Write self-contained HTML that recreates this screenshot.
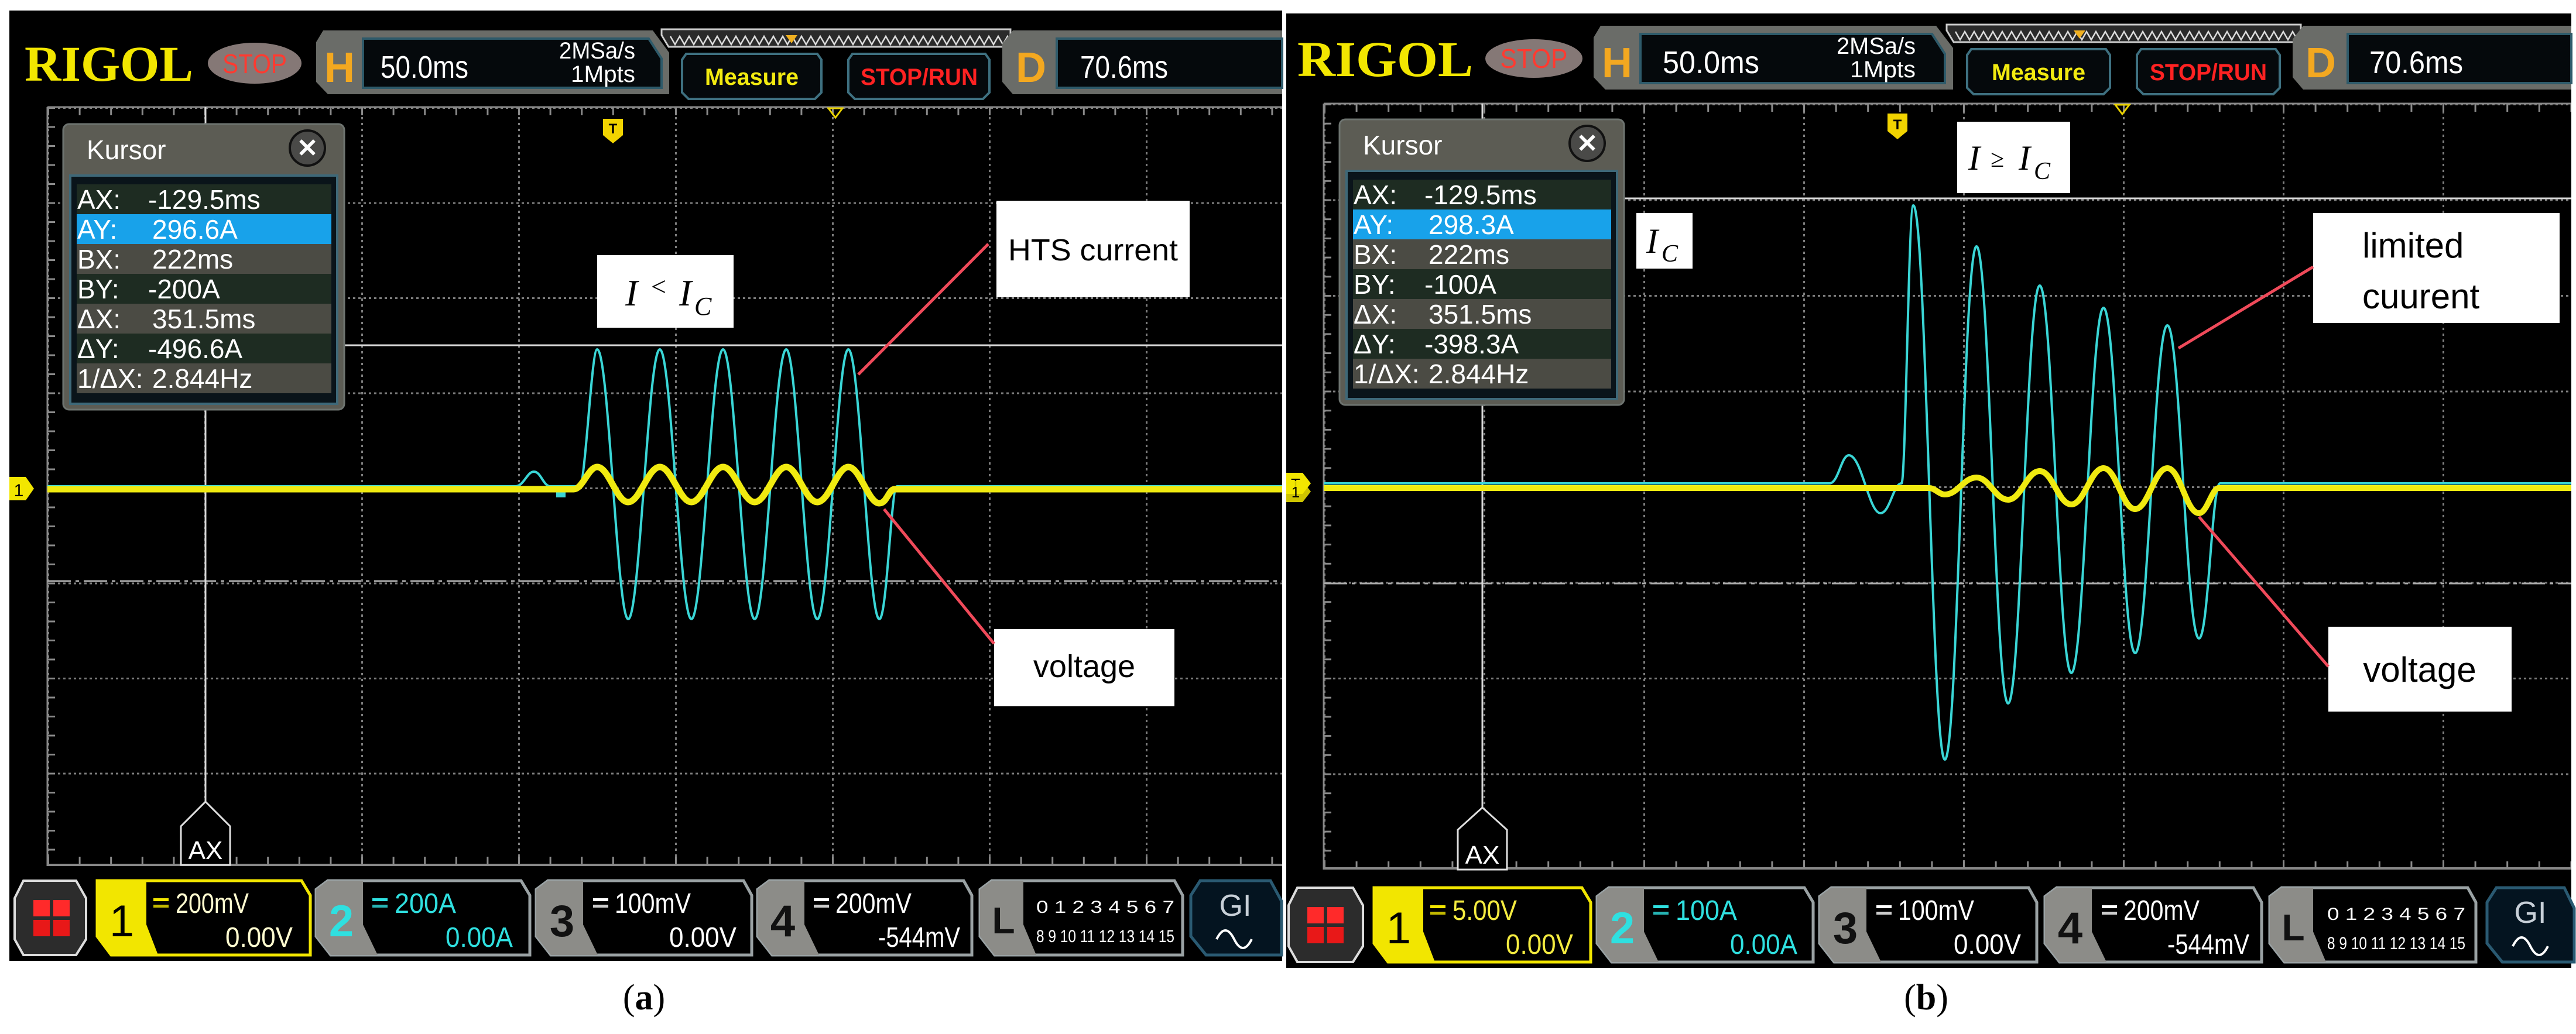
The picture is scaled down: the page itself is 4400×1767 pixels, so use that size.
<!DOCTYPE html>
<html><head><meta charset="utf-8"><style>
html,body{margin:0;padding:0;background:#fff;}
svg{display:block;}
</style></head><body>
<svg width="4400" height="1767" viewBox="0 0 4400 1767" xmlns="http://www.w3.org/2000/svg" font-family="Liberation Sans, sans-serif">
<defs>
<pattern id="vlA" x="81" y="0" width="268" height="10" patternUnits="userSpaceOnUse"><rect x="0" y="0" width="3" height="4" fill="#7d7d7d"/></pattern>
<pattern id="hlA" x="0" y="183" width="9" height="162.5" patternUnits="userSpaceOnUse"><rect x="0" y="0" width="4" height="3" fill="#7d7d7d"/></pattern>
<pattern id="vlB" x="2261" y="0" width="273" height="10" patternUnits="userSpaceOnUse"><rect x="0" y="0" width="3" height="4" fill="#7d7d7d"/></pattern>
<pattern id="hlB" x="0" y="177" width="9" height="163.5" patternUnits="userSpaceOnUse"><rect x="0" y="0" width="4" height="3" fill="#7d7d7d"/></pattern>
<pattern id="txA" x="81" y="0" width="53.6" height="20" patternUnits="userSpaceOnUse"><rect x="0" y="0" width="3" height="20" fill="#8a8a8a"/></pattern>
<pattern id="tyA" x="0" y="183" width="20" height="32.5" patternUnits="userSpaceOnUse"><rect x="0" y="0" width="14" height="3" fill="#8a8a8a"/></pattern>
<pattern id="txB" x="2261" y="0" width="54.6" height="20" patternUnits="userSpaceOnUse"><rect x="0" y="0" width="3" height="20" fill="#8a8a8a"/></pattern>
<pattern id="tyB" x="0" y="177" width="20" height="32.7" patternUnits="userSpaceOnUse"><rect x="0" y="0" width="14" height="3" fill="#8a8a8a"/></pattern>
</defs>
<rect width="4400" height="1767" fill="#fff"/>
<rect x="16" y="18" width="2174" height="1624" fill="#000"/>
<rect x="2197" y="23" width="2195" height="1631" fill="#000"/>

<!-- GRID A -->
<rect x="81" y="183" width="2109" height="1297" fill="url(#vlA)"/>
<rect x="81" y="183" width="2109" height="1297" fill="url(#hlA)"/>
<rect x="81" y="183" width="2109" height="14" fill="url(#txA)"/>
<rect x="81" y="1464" width="2109" height="14" fill="url(#txA)"/>
<rect x="81" y="183" width="14" height="1297" fill="url(#tyA)"/>
<line x1="81" y1="183" x2="2190" y2="183" stroke="#888" stroke-width="3"/>
<line x1="81" y1="183" x2="81" y2="1480" stroke="#888" stroke-width="3"/>
<line x1="81" y1="1478" x2="2190" y2="1478" stroke="#888" stroke-width="4"/>
<!-- GRID B -->
<rect x="2261" y="177" width="2131" height="1309" fill="url(#vlB)"/>
<rect x="2261" y="177" width="2131" height="1309" fill="url(#hlB)"/>
<rect x="2261" y="177" width="2131" height="14" fill="url(#txB)"/>
<rect x="2261" y="1472" width="2131" height="14" fill="url(#txB)"/>
<rect x="2261" y="177" width="14" height="1309" fill="url(#tyB)"/>
<line x1="2261" y1="177" x2="4392" y2="177" stroke="#888" stroke-width="3"/>
<line x1="2261" y1="177" x2="2261" y2="1486" stroke="#888" stroke-width="3"/>
<line x1="2261" y1="1484" x2="4392" y2="1484" stroke="#888" stroke-width="4"/>

<!-- cursor lines A -->
<line x1="81" y1="993" x2="2190" y2="993" stroke="#aaa" stroke-width="3" stroke-dasharray="40,8,6,8"/>
<line x1="586" y1="590" x2="2190" y2="590" stroke="#d8d8d8" stroke-width="3"/>
<line x1="351" y1="183" x2="351" y2="1370" stroke="#d8d8d8" stroke-width="3"/>
<path d="M351 1370 L393 1412 L393 1478 L309 1478 L309 1412 Z" fill="#000" stroke="#e0e0e0" stroke-width="3"/>
<text x="351" y="1468" font-size="44" fill="#fff" text-anchor="middle">AX</text>
<!-- cursor lines B -->
<line x1="2261" y1="997" x2="4392" y2="997" stroke="#aaa" stroke-width="3" stroke-dasharray="40,8,6,8"/>
<line x1="2774" y1="339" x2="4392" y2="339" stroke="#d8d8d8" stroke-width="3"/>
<line x1="2532" y1="177" x2="2532" y2="1380" stroke="#d8d8d8" stroke-width="3"/>
<path d="M2532 1380 L2574 1418 L2574 1486 L2490 1486 L2490 1418 Z" fill="#000" stroke="#e0e0e0" stroke-width="3"/>
<text x="2532" y="1476" font-size="44" fill="#fff" text-anchor="middle">AX</text>

<!-- trigger markers -->
<path d="M1030 203 h34 v28 l-17 14 l-17 -14 Z" fill="#f2d400"/><text x="1047" y="228" font-size="24" font-weight="bold" text-anchor="middle" fill="#000">T</text>
<path d="M1415 185 h24 l-12 16 Z" fill="none" stroke="#e8d000" stroke-width="3"/>
<path d="M3224 194 h34 v30 l-17 14 l-17 -14 Z" fill="#f2d400"/><text x="3241" y="221" font-size="24" font-weight="bold" text-anchor="middle" fill="#000">T</text>
<path d="M3613 179 h24 l-12 16 Z" fill="none" stroke="#e8d000" stroke-width="3"/>

<!-- WAVES A -->
<path d="M81 831 L880 831 C895 831 900 806 912 806 C924 806 928 831 940 831 L990 831
C1000 831 1010 597 1020 597 C1040 597 1054 1058 1073 1058 C1093 1058 1107 597 1127 597 C1147 597 1161 1058 1181 1058 C1201 1058 1215 597 1235 597 C1255 597 1269 1058 1289 1058 C1309 1058 1323 597 1343 597 C1362 597 1376 1058 1396 1058 C1416 1058 1430 597 1449 597 C1469 597 1483 1058 1502 1058 C1515 1058 1522 831 1532 831 L2190 831"
 fill="none" stroke="#3ad6d6" stroke-width="4"/>
<rect x="950" y="840" width="16" height="10" fill="#3ad6d6"/>
<path d="M81 836 L980 836 C995 836 1005 798 1020 798 C1040 798 1053 858 1073 858 C1093 858 1107 798 1127 798 C1147 798 1161 858 1181 858 C1201 858 1215 798 1235 798 C1255 798 1269 858 1289 858 C1309 858 1323 798 1343 798 C1362 798 1376 858 1396 858 C1416 858 1430 798 1449 798 C1469 798 1483 860 1502 860 C1515 860 1518 836 1528 836 L2190 836" fill="none" stroke="#f0ea10" stroke-width="11" stroke-linejoin="round"/>
<path d="M16 815 h28 l14 20 l-14 20 h-28 Z" fill="#f2e600"/><text x="32" y="848" font-size="30" fill="#000" text-anchor="middle">1</text>

<!-- WAVES B -->
<path d="M2261 826 L3125 826 C3140 826 3145 778 3158 778 C3180 778 3192 877 3212 877 C3228 877 3234 826 3248 826
C3255 826 3260 351 3268 351 C3290 351 3300 1298 3322 1298 C3344 1298 3354 421 3376 421 C3398 421 3408 1202 3430 1202 C3452 1202 3462 488 3484 488 C3506 488 3516 1150 3538 1150 C3560 1150 3571 526 3593 526 C3615 526 3625 1116 3647 1116 C3669 1116 3680 556 3702 556 C3724 556 3734 1091 3756 1091 C3772 1091 3778 826 3792 826 L4392 826"
 fill="none" stroke="#3ad6d6" stroke-width="4"/>
<path d="M2261 834 L3295 834 C3305 834 3312 845 3322 845 C3344 845 3354 816 3376 816 C3398 816 3408 854 3430 854 C3452 854 3462 805 3484 805 C3506 805 3516 862 3538 862 C3560 862 3571 800 3593 800 C3615 800 3625 870 3647 870 C3669 870 3680 800 3702 800 C3724 800 3734 877 3756 877 C3770 877 3778 834 3790 834 L4392 834" fill="none" stroke="#f0ea10" stroke-width="10" stroke-linejoin="round"/>
<path d="M2197 808 h28 l14 18 l-14 18 h-28 Z" fill="#f2e600"/><text x="2213" y="836" font-size="26" fill="#000" text-anchor="middle">T</text>
<path d="M2197 822 h28 l14 18 l-14 18 h-28 Z" fill="#f2e600" opacity="0.85"/><text x="2213" y="850" font-size="26" fill="#000" text-anchor="middle">1</text>

<!-- ANNOTATIONS A -->
<rect x="1020" y="436" width="233" height="124" fill="#fff"/>
<text x="1068" y="522" font-family="Liberation Serif, serif" font-style="italic" font-size="64" fill="#000">I</text>
<text x="1112" y="505" font-family="Liberation Serif, serif" font-size="46" fill="#000">&lt;</text>
<text x="1160" y="522" font-family="Liberation Serif, serif" font-style="italic" font-size="64" fill="#000">I</text>
<text x="1186" y="538" font-family="Liberation Serif, serif" font-style="italic" font-size="44" fill="#000">C</text>
<rect x="1702" y="343" width="330" height="165" fill="#fff"/>
<text x="1867" y="445" font-size="52" fill="#000" text-anchor="middle" textLength="290" lengthAdjust="spacingAndGlyphs">HTS current</text>
<line x1="1688" y1="417" x2="1466" y2="640" stroke="#f04a5a" stroke-width="5"/>
<rect x="1698" y="1075" width="308" height="132" fill="#fff"/>
<text x="1852" y="1157" font-size="54" fill="#000" text-anchor="middle">voltage</text>
<line x1="1698" y1="1100" x2="1510" y2="870" stroke="#f04a5a" stroke-width="5"/>

<!-- ANNOTATIONS B -->
<rect x="3343" y="208" width="193" height="122" fill="#fff"/>
<text x="3362" y="290" font-family="Liberation Serif, serif" font-style="italic" font-size="60" fill="#000">I</text>
<text x="3400" y="285" font-family="Liberation Serif, serif" font-size="42" fill="#000">≥</text>
<text x="3448" y="290" font-family="Liberation Serif, serif" font-style="italic" font-size="60" fill="#000">I</text>
<text x="3474" y="306" font-family="Liberation Serif, serif" font-style="italic" font-size="42" fill="#000">C</text>
<rect x="2795" y="364" width="96" height="95" fill="#fff"/>
<text x="2812" y="432" font-family="Liberation Serif, serif" font-style="italic" font-size="60" fill="#000">I</text>
<text x="2838" y="447" font-family="Liberation Serif, serif" font-style="italic" font-size="42" fill="#000">C</text>
<rect x="3951" y="364" width="421" height="188" fill="#fff"/>
<text x="4035" y="440" font-size="60" fill="#000">limited</text>
<text x="4035" y="527" font-size="60" fill="#000">cuurent</text>
<line x1="3951" y1="456" x2="3721" y2="595" stroke="#f04a5a" stroke-width="5"/>
<rect x="3977" y="1071" width="313" height="145" fill="#fff"/>
<text x="4133" y="1165" font-size="60" fill="#000" text-anchor="middle">voltage</text>
<line x1="3977" y1="1139" x2="3756" y2="883" stroke="#f04a5a" stroke-width="5"/>

<!-- KURSOR A -->
<g>
<rect x="108" y="212" width="480" height="488" rx="10" fill="#5c5c54" stroke="#6e7470" stroke-width="3"/>
<text x="148" y="272" font-size="46" fill="#fff">Kursor</text>
<circle cx="525" cy="253" r="30" fill="#4a4a48" stroke="#111" stroke-width="4"/>
<text x="525" y="268" font-size="44" font-weight="bold" fill="#fff" text-anchor="middle">✕</text>
<rect x="120" y="300" width="456" height="390" fill="#0a141a" stroke="#3e6878" stroke-width="4"/>
<rect x="131" y="315" width="435" height="51" fill="#1e2c22"/>
<rect x="131" y="366" width="435" height="51" fill="#18a2ea"/>
<rect x="131" y="417" width="435" height="51" fill="#4b4b44"/>
<rect x="131" y="468" width="435" height="51" fill="#1e2c22"/>
<rect x="131" y="519" width="435" height="51" fill="#4b4b44"/>
<rect x="131" y="570" width="435" height="51" fill="#1e2c22"/>
<rect x="131" y="621" width="435" height="51" fill="#4b4b44"/>
<g font-size="46" fill="#fff">
<text x="132" y="357">AX:</text><text x="253" y="357">-129.5ms</text>
<text x="132" y="408">AY:</text><text x="260" y="408">296.6A</text>
<text x="132" y="459">BX:</text><text x="260" y="459">222ms</text>
<text x="132" y="510">BY:</text><text x="253" y="510">-200A</text>
<text x="132" y="561">ΔX:</text><text x="260" y="561">351.5ms</text>
<text x="132" y="612">ΔY:</text><text x="253" y="612">-496.6A</text>
<text x="132" y="663">1/ΔX:</text><text x="260" y="663">2.844Hz</text>
</g>
</g>
<!-- KURSOR B -->
<g transform="translate(2180,-8)">
<rect x="108" y="212" width="486" height="488" rx="10" fill="#5c5c54" stroke="#6e7470" stroke-width="3"/>
<text x="148" y="272" font-size="46" fill="#fff">Kursor</text>
<circle cx="531" cy="253" r="30" fill="#4a4a48" stroke="#111" stroke-width="4"/>
<text x="531" y="268" font-size="44" font-weight="bold" fill="#fff" text-anchor="middle">✕</text>
<rect x="120" y="300" width="462" height="390" fill="#0a141a" stroke="#3e6878" stroke-width="4"/>
<rect x="131" y="315" width="441" height="51" fill="#1e2c22"/>
<rect x="131" y="366" width="441" height="51" fill="#18a2ea"/>
<rect x="131" y="417" width="441" height="51" fill="#4b4b44"/>
<rect x="131" y="468" width="441" height="51" fill="#1e2c22"/>
<rect x="131" y="519" width="441" height="51" fill="#4b4b44"/>
<rect x="131" y="570" width="441" height="51" fill="#1e2c22"/>
<rect x="131" y="621" width="441" height="51" fill="#4b4b44"/>
<g font-size="46" fill="#fff">
<text x="132" y="357">AX:</text><text x="253" y="357">-129.5ms</text>
<text x="132" y="408">AY:</text><text x="260" y="408">298.3A</text>
<text x="132" y="459">BX:</text><text x="260" y="459">222ms</text>
<text x="132" y="510">BY:</text><text x="253" y="510">-100A</text>
<text x="132" y="561">ΔX:</text><text x="260" y="561">351.5ms</text>
<text x="132" y="612">ΔY:</text><text x="253" y="612">-398.3A</text>
<text x="132" y="663">1/ΔX:</text><text x="260" y="663">2.844Hz</text>
</g>
</g>

<!-- TOP BAR A -->
<g>
<text x="42" y="138" font-family="Liberation Serif, serif" font-weight="bold" font-size="86" fill="#f2e600" textLength="288" lengthAdjust="spacingAndGlyphs">RIGOL</text>
<ellipse cx="435" cy="108" rx="80" ry="35" fill="#857876"/>
<text x="435" y="125" font-size="46" fill="#ff3a30" text-anchor="middle" textLength="110" lengthAdjust="spacingAndGlyphs">STOP</text>
<path d="M552 52 H1115 L1143 90 V161 H560 L540 140 V72 Z" fill="#6a6c68"/>
<path d="M620 66 H1108 L1130 100 V150 H620 Z" fill="#05090c" stroke="#2e5a6a" stroke-width="4"/>
<text x="554" y="140" font-size="72" fill="#f3a820" font-weight="bold">H</text>
<text x="650" y="133" font-size="54" fill="#fff" textLength="150" lengthAdjust="spacingAndGlyphs">50.0ms</text>
<text x="1085" y="100" font-size="40" fill="#fff" text-anchor="end" textLength="130" lengthAdjust="spacingAndGlyphs">2MSa/s</text>
<text x="1085" y="140" font-size="40" fill="#fff" text-anchor="end" textLength="110" lengthAdjust="spacingAndGlyphs">1Mpts</text>
<path d="M1130 50 H1726 V60 L1714 80 H1142 L1130 60 Z" fill="#2a2a2a" stroke="#ccc" stroke-width="3"/>
<path d="M1145 62 l8 14 l8 -14 l8 14 l8 -14 l8 14 l8 -14 l8 14 l8 -14 l8 14 l8 -14 l8 14 l8 -14 l8 14 l8 -14 l8 14 l8 -14 l8 14 l8 -14 l8 14 l8 -14 l8 14 l8 -14 l8 14 l8 -14 l8 14 l8 -14 l8 14 l8 -14 l8 14 l8 -14 l8 14 l8 -14 l8 14 l8 -14 l8 14 l8 -14 l8 14 l8 -14 l8 14 l8 -14 l8 14 l8 -14 l8 14 l8 -14 l8 14 l8 -14 l8 14 l8 -14 l8 14 l8 -14 l8 14 l8 -14 l8 14 l8 -14 l8 14 l8 -14 l8 14 l8 -14 l8 14 l8 -14 l8 14 l8 -14 l8 14 l8 -14 l8 14 l8 -14 l8 14 l8 -14 l8 14 l8 -14 l8 14 l8 -14 l8 14 l8 -14 l8 14 l8 -14 l8 14 l8 -14 l8 14 l8 -14" fill="none" stroke="#ddd" stroke-width="2.5"/>
<path d="M1342 60 h20 l-10 14 Z" fill="#f0b020"/>
<path d="M1172 92 H1396 L1403 102 V158 L1392 169 H1176 L1165 158 V102 Z" fill="#05090c" stroke="#3e7080" stroke-width="4"/>
<text x="1284" y="145" font-size="40" font-weight="bold" fill="#f2ea10" text-anchor="middle" textLength="160" lengthAdjust="spacingAndGlyphs">Measure</text>
<path d="M1456 92 H1683 L1690 102 V158 L1679 169 H1460 L1449 158 V102 Z" fill="#05090c" stroke="#3e7080" stroke-width="4"/>
<text x="1570" y="145" font-size="40" font-weight="bold" fill="#ff2222" text-anchor="middle" textLength="200" lengthAdjust="spacingAndGlyphs">STOP/RUN</text>
<path d="M1730 52 H2190 V161 H1730 L1712 140 V75 Z" fill="#6a6c68"/>
<path d="M1805 66 H2190 V150 H1805 Z" fill="#05090c" stroke="#2e5a6a" stroke-width="4"/>
<text x="1735" y="140" font-size="72" fill="#f3a820" font-weight="bold">D</text>
<text x="1845" y="133" font-size="54" fill="#fff" textLength="150" lengthAdjust="spacingAndGlyphs">70.6ms</text>
</g>
<!-- TOP BAR B -->
<g transform="translate(2182,-8)">
<text x="34" y="138" font-family="Liberation Serif, serif" font-weight="bold" font-size="86" fill="#f2e600" textLength="300" lengthAdjust="spacingAndGlyphs">RIGOL</text>
<ellipse cx="438" cy="108" rx="83" ry="33" fill="#857876"/>
<text x="438" y="124" font-size="46" fill="#ff3a30" text-anchor="middle" textLength="115" lengthAdjust="spacingAndGlyphs">STOP</text>
<path d="M552 52 H1125 L1154 90 V161 H560 L540 140 V72 Z" fill="#6a6c68"/>
<path d="M620 66 H1118 L1140 100 V150 H620 Z" fill="#05090c" stroke="#2e5a6a" stroke-width="4"/>
<text x="554" y="140" font-size="72" fill="#f3a820" font-weight="bold">H</text>
<text x="658" y="133" font-size="54" fill="#fff" textLength="165" lengthAdjust="spacingAndGlyphs">50.0ms</text>
<text x="1090" y="100" font-size="40" fill="#fff" text-anchor="end" textLength="135" lengthAdjust="spacingAndGlyphs">2MSa/s</text>
<text x="1090" y="140" font-size="40" fill="#fff" text-anchor="end" textLength="112" lengthAdjust="spacingAndGlyphs">1Mpts</text>
<path d="M1143 50 H1748 V60 L1736 80 H1155 L1143 60 Z" fill="#2a2a2a" stroke="#ccc" stroke-width="3"/>
<path d="M1158 62 l8 14 l8 -14 l8 14 l8 -14 l8 14 l8 -14 l8 14 l8 -14 l8 14 l8 -14 l8 14 l8 -14 l8 14 l8 -14 l8 14 l8 -14 l8 14 l8 -14 l8 14 l8 -14 l8 14 l8 -14 l8 14 l8 -14 l8 14 l8 -14 l8 14 l8 -14 l8 14 l8 -14 l8 14 l8 -14 l8 14 l8 -14 l8 14 l8 -14 l8 14 l8 -14 l8 14 l8 -14 l8 14 l8 -14 l8 14 l8 -14 l8 14 l8 -14 l8 14 l8 -14 l8 14 l8 -14 l8 14 l8 -14 l8 14 l8 -14 l8 14 l8 -14 l8 14 l8 -14 l8 14 l8 -14 l8 14 l8 -14 l8 14 l8 -14 l8 14 l8 -14 l8 14 l8 -14 l8 14 l8 -14 l8 14 l8 -14 l8 14 l8 -14 l8 14 l8 -14 l8 14 l8 -14 l8 14 l8 -14" fill="none" stroke="#ddd" stroke-width="2.5"/>
<path d="M1360 60 h20 l-10 14 Z" fill="#f0b020"/>
<path d="M1185 92 H1415 L1422 102 V158 L1411 169 H1189 L1178 158 V102 Z" fill="#05090c" stroke="#3e7080" stroke-width="4"/>
<text x="1300" y="145" font-size="40" font-weight="bold" fill="#f2ea10" text-anchor="middle" textLength="160" lengthAdjust="spacingAndGlyphs">Measure</text>
<path d="M1475 92 H1705 L1712 102 V158 L1701 169 H1479 L1468 158 V102 Z" fill="#05090c" stroke="#3e7080" stroke-width="4"/>
<text x="1590" y="145" font-size="40" font-weight="bold" fill="#ff2222" text-anchor="middle" textLength="200" lengthAdjust="spacingAndGlyphs">STOP/RUN</text>
<path d="M1752 52 H2210 V161 H1752 L1734 140 V75 Z" fill="#6a6c68"/>
<path d="M1828 66 H2210 V150 H1828 Z" fill="#05090c" stroke="#2e5a6a" stroke-width="4"/>
<text x="1756" y="140" font-size="72" fill="#f3a820" font-weight="bold">D</text>
<text x="1865" y="133" font-size="54" fill="#fff" textLength="160" lengthAdjust="spacingAndGlyphs">70.6ms</text>
</g>

<!-- BOTTOM BAR A -->
<g>
<path d="M40 1505 H130 L147 1535 V1605 L130 1632 H40 L25 1605 V1535 Z" fill="#2c2c2c" stroke="#ddd" stroke-width="4"/>
<rect x="57" y="1538" width="28" height="28" fill="#ff2a2a"/><rect x="91" y="1538" width="28" height="28" fill="#ff2a2a"/>
<rect x="57" y="1572" width="28" height="28" fill="#e81818"/><rect x="91" y="1572" width="28" height="28" fill="#e81818"/>
<path d="M166 1505 H515 L530 1530 V1632 H190 L166 1600 Z" fill="#000" stroke="#f2e600" stroke-width="5"/>
<path d="M166 1505 H250 V1580 L270 1632 H190 L166 1600 Z" fill="#f2e600"/>
<text x="208" y="1600" font-size="76" fill="#000" text-anchor="middle">1</text>
<rect x="262" y="1535" width="26" height="5" fill="#f2e600"/><rect x="262" y="1546" width="26" height="5" fill="#f2e600" opacity="0.8"/>
<text x="300" y="1560" font-size="48" fill="#fffbd0" textLength="125" lengthAdjust="spacingAndGlyphs">200mV</text>
<text x="500" y="1618" font-size="48" fill="#fffbd0" text-anchor="end" textLength="115" lengthAdjust="spacingAndGlyphs">0.00V</text>

<path d="M560 1505 H890 L905 1530 V1632 H565 L540 1600 V1520 Z" fill="#000" stroke="#9aa2a4" stroke-width="5"/>
<path d="M560 1505 H620 V1580 L645 1632 H565 L540 1600 V1520 Z" fill="#8c8c88"/>
<text x="583" y="1600" font-size="76" font-weight="bold" fill="#2fe0e0" text-anchor="middle">2</text>
<rect x="636" y="1535" width="26" height="5" fill="#2fe0e0"/><rect x="636" y="1546" width="26" height="5" fill="#2fe0e0" opacity="0.8"/>
<text x="674" y="1560" font-size="48" fill="#2fe0e0" textLength="105" lengthAdjust="spacingAndGlyphs">200A</text>
<text x="876" y="1618" font-size="48" fill="#2fe0e0" text-anchor="end" textLength="115" lengthAdjust="spacingAndGlyphs">0.00A</text>

<path d="M936 1505 H1270 L1284 1530 V1632 H941 L916 1600 V1520 Z" fill="#000" stroke="#9aa2a4" stroke-width="5"/>
<path d="M936 1505 H996 V1580 L1021 1632 H941 L916 1600 V1520 Z" fill="#8c8c88"/>
<text x="960" y="1600" font-size="76" font-weight="bold" fill="#111" text-anchor="middle">3</text>
<rect x="1013" y="1535" width="26" height="5" fill="#fff"/><rect x="1013" y="1546" width="26" height="5" fill="#fff" opacity="0.8"/>
<text x="1050" y="1560" font-size="48" fill="#fff" textLength="130" lengthAdjust="spacingAndGlyphs">100mV</text>
<text x="1258" y="1618" font-size="48" fill="#fff" text-anchor="end" textLength="115" lengthAdjust="spacingAndGlyphs">0.00V</text>

<path d="M1314 1505 H1646 L1660 1530 V1632 H1319 L1294 1600 V1520 Z" fill="#000" stroke="#9aa2a4" stroke-width="5"/>
<path d="M1314 1505 H1374 V1580 L1399 1632 H1319 L1294 1600 V1520 Z" fill="#8c8c88"/>
<text x="1337" y="1600" font-size="76" font-weight="bold" fill="#111" text-anchor="middle">4</text>
<rect x="1390" y="1535" width="26" height="5" fill="#fff"/><rect x="1390" y="1546" width="26" height="5" fill="#fff" opacity="0.8"/>
<text x="1427" y="1560" font-size="48" fill="#fff" textLength="130" lengthAdjust="spacingAndGlyphs">200mV</text>
<text x="1640" y="1618" font-size="48" fill="#fff" text-anchor="end" textLength="140" lengthAdjust="spacingAndGlyphs">-544mV</text>

<path d="M1694 1505 H2006 L2020 1530 V1632 H1699 L1674 1600 V1520 Z" fill="#000" stroke="#9aa2a4" stroke-width="5"/>
<path d="M1694 1505 H1748 V1580 L1770 1632 H1699 L1674 1600 V1520 Z" fill="#8c8c88"/>
<text x="1714" y="1595" font-size="64" font-weight="bold" fill="#111" text-anchor="middle">L</text>
<text x="1770" y="1560" font-size="30" fill="#fff" textLength="236" lengthAdjust="spacingAndGlyphs">0 1 2 3  4 5 6 7</text>
<text x="1770" y="1610" font-size="30" fill="#fff" textLength="236" lengthAdjust="spacingAndGlyphs">8 9 10 11 12 13 14 15</text>

<path d="M2050 1505 H2170 L2189 1540 V1632 H2060 L2034 1600 V1530 Z" fill="#041420" stroke="#2a5a72" stroke-width="5"/>
<text x="2110" y="1565" font-size="52" fill="#c8d0d8" text-anchor="middle">GI</text>
<path d="M2078 1605 q15 -30 30 0 t30 0" fill="none" stroke="#fff" stroke-width="4"/>
</g>

<!-- BOTTOM BAR B -->
<g>
<path d="M2216 1517 H2311 L2328 1547 V1617 L2311 1644 H2216 L2201 1617 V1547 Z" fill="#2c2c2c" stroke="#ddd" stroke-width="4"/>
<rect x="2233" y="1550" width="28" height="28" fill="#ff2a2a"/><rect x="2267" y="1550" width="28" height="28" fill="#ff2a2a"/>
<rect x="2233" y="1584" width="28" height="28" fill="#e81818"/><rect x="2267" y="1584" width="28" height="28" fill="#e81818"/>
<path d="M2347 1517 H2702 L2717 1542 V1644 H2371 L2347 1612 Z" fill="#000" stroke="#f2e600" stroke-width="5"/>
<path d="M2347 1517 H2431 V1592 L2451 1644 H2371 L2347 1612 Z" fill="#f2e600"/>
<text x="2389" y="1612" font-size="76" fill="#000" text-anchor="middle">1</text>
<rect x="2443" y="1547" width="26" height="5" fill="#f2e600"/><rect x="2443" y="1558" width="26" height="5" fill="#f2e600" opacity="0.8"/>
<text x="2481" y="1572" font-size="48" fill="#f5ec40" textLength="110" lengthAdjust="spacingAndGlyphs">5.00V</text>
<text x="2687" y="1630" font-size="48" fill="#f5ec40" text-anchor="end" textLength="115" lengthAdjust="spacingAndGlyphs">0.00V</text>

<path d="M2748 1517 H3082 L3097 1542 V1644 H2753 L2728 1612 V1532 Z" fill="#000" stroke="#9aa2a4" stroke-width="5"/>
<path d="M2748 1517 H2808 V1592 L2833 1644 H2753 L2728 1612 V1532 Z" fill="#8c8c88"/>
<text x="2771" y="1612" font-size="76" font-weight="bold" fill="#2fe0e0" text-anchor="middle">2</text>
<rect x="2824" y="1547" width="26" height="5" fill="#2fe0e0"/><rect x="2824" y="1558" width="26" height="5" fill="#2fe0e0" opacity="0.8"/>
<text x="2862" y="1572" font-size="48" fill="#2fe0e0" textLength="105" lengthAdjust="spacingAndGlyphs">100A</text>
<text x="3070" y="1630" font-size="48" fill="#2fe0e0" text-anchor="end" textLength="115" lengthAdjust="spacingAndGlyphs">0.00A</text>

<path d="M3128 1517 H3465 L3479 1542 V1644 H3133 L3108 1612 V1532 Z" fill="#000" stroke="#9aa2a4" stroke-width="5"/>
<path d="M3128 1517 H3188 V1592 L3213 1644 H3133 L3108 1612 V1532 Z" fill="#8c8c88"/>
<text x="3152" y="1612" font-size="76" font-weight="bold" fill="#111" text-anchor="middle">3</text>
<rect x="3205" y="1547" width="26" height="5" fill="#fff"/><rect x="3205" y="1558" width="26" height="5" fill="#fff" opacity="0.8"/>
<text x="3242" y="1572" font-size="48" fill="#fff" textLength="130" lengthAdjust="spacingAndGlyphs">100mV</text>
<text x="3452" y="1630" font-size="48" fill="#fff" text-anchor="end" textLength="115" lengthAdjust="spacingAndGlyphs">0.00V</text>

<path d="M3513 1517 H3849 L3863 1542 V1644 H3518 L3493 1612 V1532 Z" fill="#000" stroke="#9aa2a4" stroke-width="5"/>
<path d="M3513 1517 H3573 V1592 L3598 1644 H3518 L3493 1612 V1532 Z" fill="#8c8c88"/>
<text x="3536" y="1612" font-size="76" font-weight="bold" fill="#111" text-anchor="middle">4</text>
<rect x="3590" y="1547" width="26" height="5" fill="#fff"/><rect x="3590" y="1558" width="26" height="5" fill="#fff" opacity="0.8"/>
<text x="3627" y="1572" font-size="48" fill="#fff" textLength="130" lengthAdjust="spacingAndGlyphs">200mV</text>
<text x="3842" y="1630" font-size="48" fill="#fff" text-anchor="end" textLength="140" lengthAdjust="spacingAndGlyphs">-544mV</text>

<path d="M3897 1517 H4215 L4229 1542 V1644 H3902 L3877 1612 V1532 Z" fill="#000" stroke="#9aa2a4" stroke-width="5"/>
<path d="M3897 1517 H3951 V1592 L3973 1644 H3902 L3877 1612 V1532 Z" fill="#8c8c88"/>
<text x="3917" y="1607" font-size="64" font-weight="bold" fill="#111" text-anchor="middle">L</text>
<text x="3975" y="1572" font-size="30" fill="#fff" textLength="236" lengthAdjust="spacingAndGlyphs">0 1 2 3  4 5 6 7</text>
<text x="3975" y="1622" font-size="30" fill="#fff" textLength="236" lengthAdjust="spacingAndGlyphs">8 9 10 11 12 13 14 15</text>

<path d="M4264 1517 H4380 L4397 1552 V1644 H4274 L4248 1612 V1542 Z" fill="#041420" stroke="#2a5a72" stroke-width="5"/>
<text x="4322" y="1577" font-size="52" fill="#c8d0d8" text-anchor="middle">GI</text>
<path d="M4292 1617 q15 -30 30 0 t30 0" fill="none" stroke="#fff" stroke-width="4"/>
</g>

<!-- captions -->
<text x="1100" y="1725" font-family="Liberation Serif, serif" font-size="62" fill="#000" text-anchor="middle">(<tspan font-weight="bold">a</tspan>)</text>
<text x="3290" y="1725" font-family="Liberation Serif, serif" font-size="62" fill="#000" text-anchor="middle">(<tspan font-weight="bold">b</tspan>)</text>
</svg>
</body></html>
